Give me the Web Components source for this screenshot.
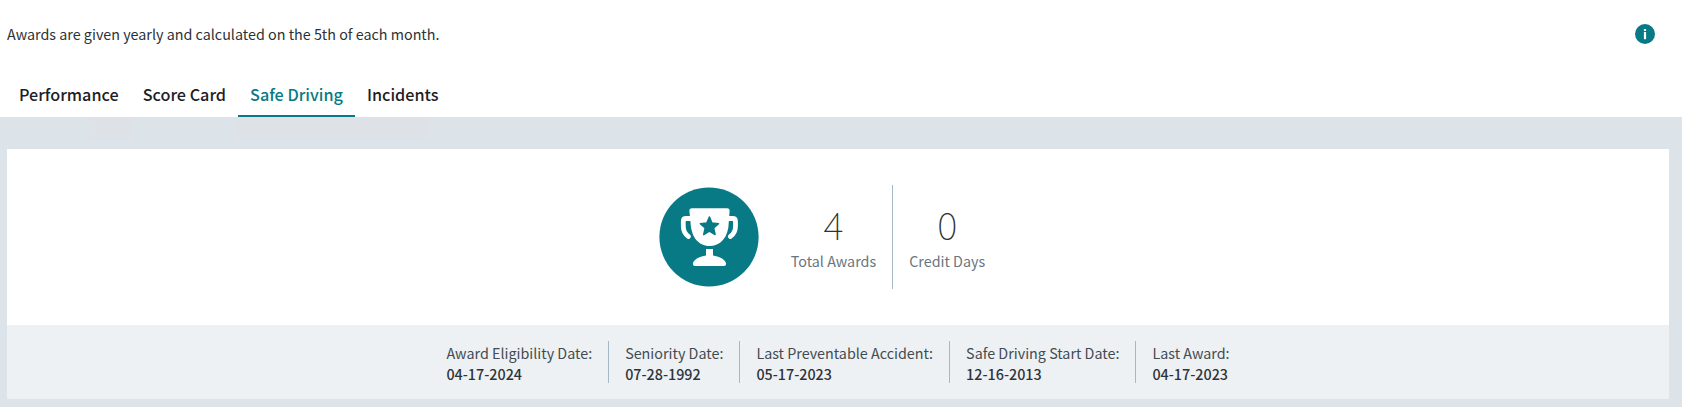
<!DOCTYPE html>
<html lang="en">
<head>
<meta charset="utf-8">
<title>Awards</title>
<style>
  body {
    margin: 0;
    background: #dce4ea;
    font-family: "Noto Sans CJK SC", "Open Sans", sans-serif;
    font-size: 14.33px;
    color: #2d3236;
  }
</style>
</head>
<body>
<awards-page></awards-page>

<script>
class InfoBar extends HTMLElement {
  constructor() {
    super();
    this.attachShadow({mode: 'open'}).innerHTML = `
      <style>
        :host {
          display: flex;
          justify-content: space-between;
          align-items: center;
          height: 68px;
          padding: 0 27px 0 7px;
          box-sizing: border-box;
          line-height: 24px;
        }
        svg { display: block; }
      </style>
      <span><slot></slot></span>
      <svg width="20" height="20" viewBox="0 0 20 20">
        <circle cx="10" cy="10" r="10" fill="#087a85"/>
        <rect x="8.9" y="5" width="2.2" height="2" fill="#fff"/>
        <rect x="8.9" y="8" width="2.2" height="7.2" fill="#fff"/>
      </svg>
    `;
  }
}
customElements.define('info-bar', InfoBar);

class TabItem extends HTMLElement {
  constructor() {
    super();
    this.attachShadow({mode: 'open'}).innerHTML = `
      <style>
        :host {
          display: block;
          box-sizing: border-box;
          height: 49px;
          padding: 14px 12px 0;
          border-bottom: 2px solid transparent;
          font-size: 16.2px;
          font-weight: 500;
          line-height: 24px;
          color: #1d2023;
          white-space: nowrap;
        }
        :host([active]) {
          color: #087a85;
          border-bottom-color: #087a85;
        }
      </style>
      <slot></slot>
    `;
  }
}
customElements.define('tab-item', TabItem);

class TotalItem extends HTMLElement {
  constructor() {
    super();
    this.attachShadow({mode: 'open'}).innerHTML = `
      <style>
        :host {
          display: block;
          box-sizing: border-box;
          height: 104px;
          padding: 14px 16px 0;
          text-align: center;
          white-space: nowrap;
        }
        :host(:not(:last-of-type)) { border-right: 1px solid #a3bac6; }
        .value {
          margin-bottom: 2px;
          font-size: 38.5px;
          font-weight: 100;
          line-height: 48px;
        }
        .label {
          line-height: 24px;
          color: #687580;
        }
      </style>
      <div class="value">${this.getAttribute('value')}</div>
      <div class="label"><slot></slot></div>
    `;
  }
}
customElements.define('total-item', TotalItem);

class DateItem extends HTMLElement {
  constructor() {
    super();
    this.attachShadow({mode: 'open'}).innerHTML = `
      <style>
        :host {
          display: block;
          box-sizing: border-box;
          height: 42px;
          padding: 1px 16px 0;
          line-height: 21px;
          color: #434b50;
          white-space: nowrap;
        }
        :host(:not(:last-of-type)) { border-right: 1px solid #a3bac6; }
        .value { font-weight: 500; color: #2d3439; }
      </style>
      <div><slot></slot></div>
      <div class="value">${this.getAttribute('value')}</div>
    `;
  }
}
customElements.define('date-item', DateItem);

class TrophyBadge extends HTMLElement {
  constructor() {
    super();
    this.attachShadow({mode: 'open'}).innerHTML = `
      <style>
        :host { display: block; width: 100px; height: 100px; }
        svg { display: block; }
      </style>
      <svg width="100" height="100" viewBox="0 0 100 100">
        <circle cx="50" cy="50" r="49.6" fill="#087a85"/>
        <path d="M33 31.5H27Q24.3 31.5 24.3 34.5V39Q24.3 46 29.5 49.5M67 31.5H73.5Q76.5 31.5 76.5 34.5V39Q76.5 46 71.3 49.5" fill="none" stroke="#fff" stroke-width="4.8" stroke-linecap="round"/>
        <path d="M33 21.3H68Q70.8 21.3 70.6 24L69.8 35C69.5 51 61 59 50.4 59C39.5 59 32 50 31.5 35L30.4 24Q30.2 21.3 33 21.3Z" fill="#fff"/>
        <path d="M50.4 30L53 36.1L59.5 36.7L54.6 41L56.1 47.5L50.4 44L44.7 47.5L46.2 41L41.3 36.7L47.8 36.1Z" fill="#087a85" stroke="#087a85" stroke-width="1.5" stroke-linejoin="round"/>
        <path d="M47 62H54V68.6C60 69.5 65.5 72 67 76Q67.5 79 65 79H36Q33.5 79 34 76C35.5 72 41 69.5 47 68.6Z" fill="#fff"/>
      </svg>
    `;
  }
}
customElements.define('trophy-badge', TrophyBadge);

class AwardsCard extends HTMLElement {
  constructor() {
    super();
    this.attachShadow({mode: 'open'}).innerHTML = `
      <style>
        :host { display: block; margin: 0 13px 8px 7px; }
        .summary {
          display: flex;
          justify-content: center;
          align-items: center;
          height: 176px;
          padding-right: 16px;
          box-sizing: border-box;
          background: #fff;
        }
        .totals { display: flex; margin-left: 16px; }
        .dates {
          display: flex;
          justify-content: center;
          align-items: center;
          height: 74px;
          background: #edf1f4;
        }
      </style>
      <div class="summary">
        <trophy-badge></trophy-badge>
        <div class="totals"><slot name="totals"></slot></div>
      </div>
      <div class="dates"><slot name="dates"></slot></div>
    `;
  }
}
customElements.define('awards-card', AwardsCard);

class AwardsPage extends HTMLElement {
  constructor() {
    super();
    this.attachShadow({mode: 'open'}).innerHTML = `
      <style>
        :host { display: block; }
        header { height: 117px; background: #fff; }
        nav { display: flex; padding-left: 7px; }
        .strip { display: flex; height: 32px; }
        .mark { height: 21px; background: #dee1e5; }
        .mark.small { width: 44px; margin-left: 89px; }
        .mark.wide { width: 194px; margin-left: 103px; }
      </style>
      <header>
        <info-bar>Awards are given yearly and calculated on the 5th of each month.</info-bar>
        <nav>
          <tab-item>Performance</tab-item>
          <tab-item>Score Card</tab-item>
          <tab-item active>Safe Driving</tab-item>
          <tab-item>Incidents</tab-item>
        </nav>
      </header>
      <div class="strip">
        <div class="mark small"></div>
        <div class="mark wide"></div>
      </div>
      <awards-card>
        <total-item slot="totals" value="4">Total Awards</total-item>
        <total-item slot="totals" value="0">Credit Days</total-item>
        <date-item slot="dates" value="04-17-2024">Award Eligibility Date:</date-item>
        <date-item slot="dates" value="07-28-1992">Seniority Date:</date-item>
        <date-item slot="dates" value="05-17-2023">Last Preventable Accident:</date-item>
        <date-item slot="dates" value="12-16-2013">Safe Driving Start Date:</date-item>
        <date-item slot="dates" value="04-17-2023">Last Award:</date-item>
      </awards-card>
    `;
  }
}
customElements.define('awards-page', AwardsPage);
</script>
</body>
</html>
